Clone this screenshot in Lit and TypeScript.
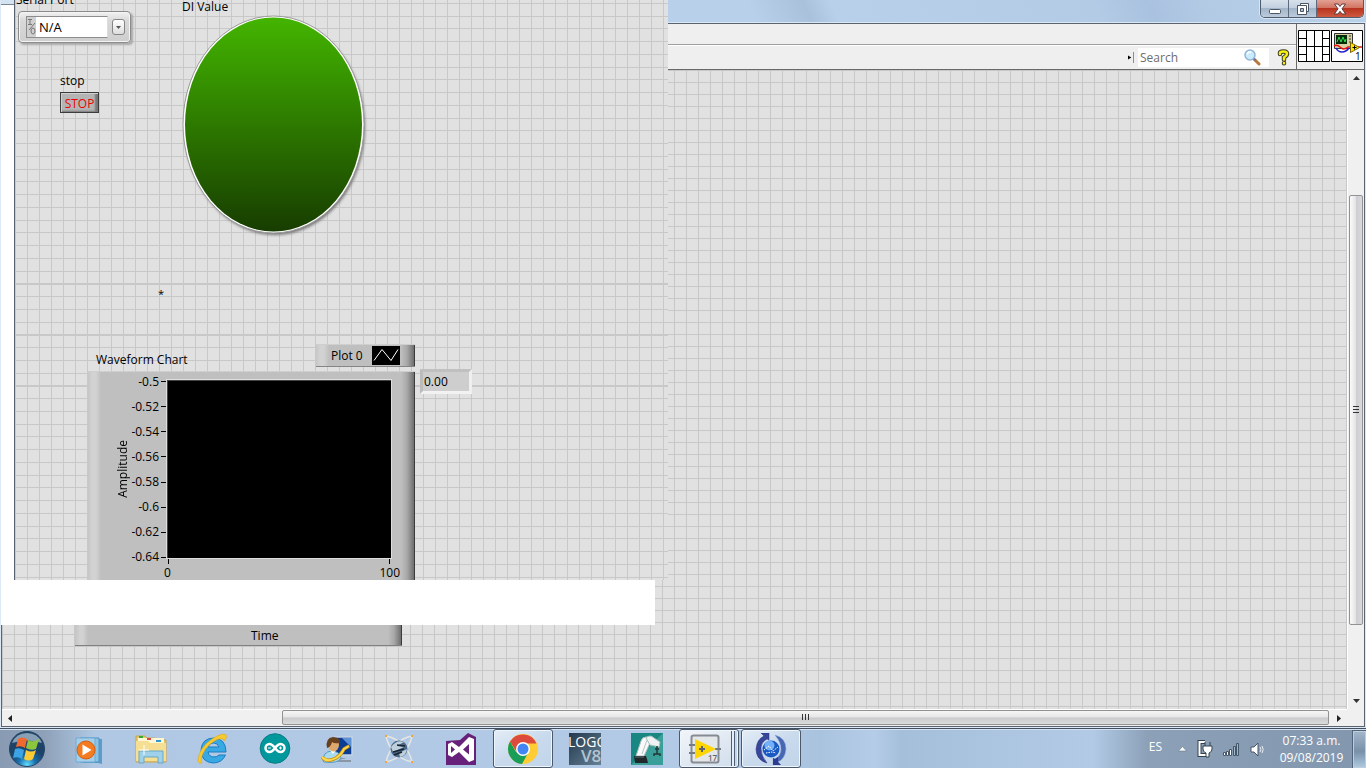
import { LitElement, html, css, svg } from "lit";
import { customElement } from "lit/decorators.js";

const base = css`
  * { box-sizing: border-box; }
  button { font: inherit; padding: 0; margin: 0; border: 0; background: none; color: inherit; }
  input { font: inherit; padding: 0; margin: 0; border: 0; outline: 0; min-width: 0; border-radius: 0; }
  svg { display: block; }
`;

@customElement("vi-window")
class ViWindow extends LitElement {
  static styles = [base, css`
    :host {
      display: grid;
      grid-template-rows: 23px 47px 1fr;
      min-height: 0;
      background: #dce8f5;
    }
    .title {
      display: flex;
      justify-content: flex-end;
      padding-right: 2px;
      background: linear-gradient(65deg, #b9d0ea 0 55%, #a9c1db 59%, #b9d0ea 61%, #b4cbe6 80%, #a9c2df 84%, #b3cae5 88%, #bad1ea);
      border-bottom: 1px solid #d9e8f6;
    }
    .caption {
      display: flex;
      height: 18px;
      border: 1px solid #4e5c6e;
      border-top: 0;
      border-radius: 0 0 5px 5px;
      overflow: hidden;
      box-shadow: 0 0 0 1px #d8e6f4;
    }
    .caption button {
      width: 28px;
      display: grid;
      place-items: center;
      background: linear-gradient(#d7e1ec, #c3d0df 45%, #a3b5ca 50%, #bccbdc);
      border-right: 1px solid #5d6b7c;
    }
    .caption .close {
      width: 46px;
      border-right: 0;
      background: linear-gradient(#e3a193, #d27563 45%, #b93420 50%, #cf5a3e);
    }
    .bars {
      display: flex;
      margin: 0 1px;
      border: 1px solid #5a636e;
      border-bottom: 1px solid #696969;
      background: #efefef;
    }
    .rows { flex: 1; display: grid; grid-template-rows: 21px 1fr; }
    .menu { border-bottom: 1px solid #a0a0a0; }
    .tools {
      display: flex;
      align-items: center;
      justify-content: flex-end;
      border-top: 1px solid #fff;
    }
    .arrow { width: 6px; height: 11px; border-right: 1px solid #8e8e8e; margin-right: 4px; }
    .search {
      display: flex;
      align-items: center;
      width: 131px;
      height: 19px;
      padding: 0 8px 0 2px;
      background: #fff;
      font-size: 12px;
    }
    .search input { flex: 1; height: 19px; background: none; }
    .search input::placeholder { color: #6d6d6d; opacity: 1; }
    .help { margin: 0 6px 0 8px; }
    .vi-icons { display: flex; gap: 1px; padding: 6px 1px 0; border-left: 1px solid #696969; }
    .body {
      display: grid;
      grid-template-columns: 1fr 17px;
      grid-template-rows: 1fr 17px;
      min-height: 0;
      margin: 0 1px 1px;
      border: 1px solid #5a636e;
      border-top: 0;
      background: #f0f0f0;
    }
    .canvas {
      position: relative;
      overflow: hidden;
      background-color: #e1e1e1;
      background-image: linear-gradient(#c8c8c8 1px, transparent 1px), linear-gradient(90deg, #c8c8c8 1px, transparent 1px);
      background-size: 12px 12px;
      background-position: 12px 12px;
    }
    .frame {
      position: absolute;
      left: 73px;
      top: 540px;
      width: 327px;
      height: 36px;
      padding: 18px 0 0 176px;
      font-size: 12px;
      line-height: 16px;
      color: #000;
      background: linear-gradient(90deg, #c4c4c4, #d2d2d2 5px 8px, #bfbfbf 13px calc(100% - 14px), #a8a8a8 calc(100% - 8px), #6e6e6e calc(100% - 1px), #3c3c3c calc(100% - 1px));
      border-bottom: 1px solid #808080;
    }
    .vbar, .hbar { display: flex; align-items: center; justify-content: space-between; background: #f0f0f0; }
    .vbar { flex-direction: column; padding: 6px 0 6px; border-left: 1px solid #fff; }
    .hbar { padding: 0 6px 0 6px; border-top: 1px solid #fff; }
    .vtrack { flex: 1; width: 100%; display: grid; grid-template-rows: 115fr 430fr 74fr; padding-left: 1px; padding-right: 1px; }
    .htrack { flex: 1; height: 100%; display: grid; grid-template-columns: 270fr 1046fr 8fr; }
    .thumb { display: grid; place-items: center; border: 1px solid #929292; border-radius: 2px; }
    .vthumb { grid-row: 2; background: linear-gradient(90deg, #fafafa, #e6e6e8 45%, #cdcdd2 55%, #dadade); }
    .hthumb { grid-column: 2; background: linear-gradient(#f6f6f6, #e6e6e7 45%, #c9cacd 55%, #dcdcdc); margin-bottom: 1px; }
  `];

  render() {
    return html`
      <header class="title">
        <div class="caption">
          <button aria-label="Minimize"><svg width="14" height="14"><rect x="1.500" y="7.500" width="11" height="4" rx="1" fill="#fff" stroke="#4b5563"/></svg></button>
          <button aria-label="Restore"><svg width="14" height="14" fill="#fff" stroke="#4b5563"><path d="M4.500 1.500h8v8h-8z"/><path d="M1.500 3.500h9v9h-9z"/><path d="M4.500 6.500h3v3h-3z" fill="#b2c2d4"/></svg></button>
          <button class="close" aria-label="Close"><svg width="14" height="12"><path d="M1.500 1h3.500l2 2.500 2-2.500h3.500l-3.500 4.800 3.700 5.200h-3.700l-2-2.700-2 2.700H1.300L5 5.800z" fill="#fff" stroke="#5d3a3e"/></svg></button>
        </div>
      </header>
      <div class="bars">
        <div class="rows">
          <div class="menu"></div>
          <div class="tools">
            <svg class="arrow" viewBox="0 0 6 11"><path d="M0 3v5l4-2.500z"/></svg>
            <label class="search">
              <input type="text" placeholder="Search" aria-label="Search">
              <svg width="17" height="17"><path d="M10 10l5 5" stroke="#b9783a" stroke-width="3" stroke-linecap="round"/><path d="M9.500 9.500l2 2" stroke="#7a6f86" stroke-width="2"/><circle cx="6" cy="6" r="5" fill="#c9ebfb" stroke="#92b4d8" stroke-width="1.500"/><path d="M3 5.500a3.500 3.500 0 0 1 4-2.500" fill="none" stroke="#fff" stroke-width="1.500"/></svg>
            </label>
            <button class="help" aria-label="Help"><svg width="13" height="17"><g fill="none" stroke-linecap="round"><path d="M3 5V4q0-1.500 3.500-1.500T10 5q0 1.500-3 3.500v2M7 14v.2" stroke="#3b3a20" stroke-width="4.500"/><path d="M3 5V4q0-1.500 3.500-1.500T10 5q0 1.500-3 3.500v2M7 14v.2" stroke="#f6ee10" stroke-width="2.500"/></g></svg></button>
          </div>
        </div>
        <div class="vi-icons">
          <svg width="32" height="32" fill="#fff" stroke="#000"><path d="M.5.500h31v31H.5z"/><path d="M8.500 0v32M16.500 0v32M24.500 0v32M0 8.500h8M0 16.500h32M0 24.500h8M24 8.500h8M24 24.500h8"/></svg>
          <svg width="32" height="32"><path d="M.5.500h31v31H.5z" fill="#fff" stroke="#000"/><path d="M3.500 3.500h18v15h-18z" fill="#d7d0a0" stroke="#333"/><path d="M5 5h11v9H5z" fill="#052b0b"/><path d="M6 12l2-5 2 5 2-5 2 5 1-3" stroke="#2ee04b" fill="none"/><path d="M18 6h2M18 9h2M18 12h2" stroke="#333"/><path d="M3 16q3-2 6 1l3 2q3 0 5-2h3" stroke="#e11" fill="none" stroke-width="1.500"/><path d="M5 18q2 4 6 4t7-4" stroke="#22c" fill="none" stroke-width="1.500"/><path d="M27 17h4" stroke="#e11" stroke-width="1.500"/><path d="M19.500 12.500v10l9-5z" fill="#ffe500" stroke="#7a6400"/><path d="M21.500 17.500h4m-2-2v4" stroke="#000"/><text x="24" y="30" font-size="10">1</text></svg>
        </div>
      </div>
      <div class="body">
        <div class="canvas"><div class="frame">Time</div></div>
        <div class="vbar">
          <svg width="7" height="4"><path d="M0 4L3.500 0 7 4z" fill="#333"/></svg>
          <div class="vtrack"><div class="thumb vthumb"><svg width="7" height="8"><path d="M0 .5h6M0 3.500h6M0 6.500h6" stroke="#333"/></svg></div></div>
          <svg width="7" height="4"><path d="M0 0L3.500 4 7 0z" fill="#333"/></svg>
        </div>
        <div class="hbar">
          <svg width="4" height="7"><path d="M4 0L0 3.500 4 7z" fill="#222"/></svg>
          <div class="htrack"><div class="thumb hthumb"><svg width="8" height="7"><path d="M.5 0v6M3.500 0v6M6.500 0v6" stroke="#333"/></svg></div></div>
          <svg width="4" height="7"><path d="M0 0l4 3.500L0 7z" fill="#222"/></svg>
        </div>
      </div>`;
  }
}

@customElement("front-panel")
class FrontPanel extends LitElement {
  static styles = [base, css`
    :host { display: block; font-size: 12px; line-height: 16px; color: #000; }
    .sheet { width: 668px; height: 580px; display: grid; grid-template-columns: 14px 1fr; }
    .edge { background: linear-gradient(#d4e3f2 0 4px, #7d8794 4px 5px, #fff 5px); border-left: 1px solid #dce8f5; }
    .blank { width: 655px; height: 45px; background: #fff; border-left: 1px solid #dce8f5; }
    .panel {
      position: relative;
      overflow: hidden;
      border-left: 1px solid #5a6170;
      background-color: #e1e1e1;
      background-image:
        linear-gradient(#c8c8c8, #c8c8c8), linear-gradient(#c8c8c8, #c8c8c8), linear-gradient(#c8c8c8, #c8c8c8),
        linear-gradient(transparent 3px, #c8c8c8 3px 4px, transparent 4px 16px, #c8c8c8 16px 17px, transparent 17px 28px, #c8c8c8 28px 29px, transparent 29px 41px, #c8c8c8 41px 42px, transparent 42px),
        linear-gradient(90deg, #c8c8c8 1px, transparent 1px);
      background-size: 100% 1px, 100% 1px, 100% 1px, 100% 51px, 12px 12px;
      background-position: 0 284px, 0 335px, 0 386px, 0 0, 0 0;
      background-repeat: no-repeat, no-repeat, no-repeat, repeat, repeat;
    }
    .item { position: absolute; white-space: nowrap; }
    .serial-label { left: 1px; top: -8px; }
    .serial {
      left: 3px; top: 11px;
      display: flex; align-items: center; gap: 4px;
      width: 113px; height: 32px; padding: 0 5px 0 7px;
      border: 1px solid #8b8b8b; border-radius: 4px;
      background: linear-gradient(#f2f2f2, #d8d8d8 30%, #cfcfcf);
      box-shadow: inset 0 0 0 1px #f4f4f4, 2px 2px 2px #aaa;
    }
    .field { flex: 1; display: flex; height: 22px; border: 1px solid #8d8d8d; border-right-color: #ddd; background: #d0d0d0; }
    .field input { flex: 1; width: 60px; padding-left: 3px; background: #fff; font-size: 13px; }
    .drop { width: 13px; height: 16px; border: 1px solid #858585; border-radius: 3px; background: linear-gradient(#fff, #ddd); display: grid; place-items: center; }
    .stop-label { left: 45px; top: 73px; }
    .stop {
      left: 45px; top: 92px; width: 39px; height: 21px;
      padding-top: 2px;
      color: #f00000;
      border: 1px solid #3c3c3c;
      background: #b4b4b4;
      box-shadow: inset 1px 1px 0 #d0d0d0, inset -3px -1px 2px #777;
    }
    .di-label { left: 167px; top: -1px; }
    .led { left: 165px; top: 12px; }
    .star { left: 143px; top: 286px; font-size: 11px; }
    .chart-label { left: 81px; top: 352px; }
    .metal { background: linear-gradient(90deg, #c6c6c6, #d2d2d2 4px 8px, #bfbfbf 13px calc(100% - 14px), #a8a8a8 calc(100% - 8px), #6e6e6e calc(100% - 1px), #3c3c3c calc(100% - 1px)); border-top: 1px solid #cfcfcf; }
    .legend { left: 301px; top: 344px; width: 99px; height: 23px; display: flex; align-items: center; justify-content: space-between; padding: 0 15px; border-bottom: 1px solid #858585; }
    .chart { left: 73px; top: 371px; width: 327px; height: 240px; display: grid; grid-template: 193px 16px / 71px 8px 224px; align-content: start; }
    .scale { display: flex; justify-content: flex-end; }
    .amp { writing-mode: vertical-rl; transform: rotate(180deg); align-self: center; }
    .ticks { display: flex; flex-direction: column; justify-content: space-between; text-align: right; width: 28px; padding-top: 2px; }
    .marks { display: flex; flex-direction: column; justify-content: space-between; padding: 9px 1px 7px 2px; }
    .mark { height: 1px; background: #000; }
    .plot { align-self: start; margin-top: 8px; height: 178px; background: #000; outline: 1px solid #dedede; border-top: 1px solid #444; border-left: 1px solid #444; }
    .plotcell { display: grid; }
    .xmarks { display: flex; justify-content: space-between; align-self: start; height: 5px; padding: 0 1px; }
    .xmark { width: 1px; background: #000; }
    .xlabels { grid-column: 3; display: flex; justify-content: space-between; margin: 0 -9px 0 -3px; }
    .digital { left: 405px; top: 369px; width: 52px; height: 25px; border: 3px solid; border-color: #c0c0c0 #efefef #f2f2f2 #bcbcbc; background: #cecece; padding: 2px 1px; }
  `];

  render() {
    const values = ["-0.5", "-0.52", "-0.54", "-0.56", "-0.58", "-0.6", "-0.62", "-0.64"];
    return html`
      <div class="sheet">
        <div class="edge"></div>
        <div class="panel">
          <label class="item serial-label" for="port">Serial Port</label>
          <div class="item serial">
            <div class="field">
              <svg width="9" height="20" fill="none" stroke="#777"><path d="M1 2.500h4M3 2.500v5M1 7.500h4M8 6l-6 7"/><ellipse cx="6" cy="14" rx="2" ry="3"/></svg>
              <input id="port" type="text" value="N/A">
            </div>
            <button class="drop" aria-label="Choose port"><svg width="5" height="3"><path d="M0 0h5L2.500 3z" fill="#555"/></svg></button>
          </div>
          <label class="item stop-label" for="stop">stop</label>
          <button class="item stop" id="stop">STOP</button>
          <div class="item di-label">DI Value</div>
          <svg class="item led" width="190" height="228">
            <defs>
              <linearGradient id="g" x2="0" y2="1"><stop stop-color="#44b400"/><stop offset=".25" stop-color="#389800"/><stop offset=".6" stop-color="#296d00"/><stop offset="1" stop-color="#173d00"/></linearGradient>
              <filter id="s"><feGaussianBlur stdDeviation="1.500"/></filter>
            </defs>
            <ellipse cx="95" cy="115" rx="90" ry="108" fill="#777" filter="url(#s)"/>
            <ellipse cx="93.500" cy="112.500" rx="90.500" ry="108.500" fill="#fff" stroke="#999"/>
            <ellipse cx="93.500" cy="112.500" rx="88.500" ry="107" fill="url(#g)"/>
          </svg>
          <div class="item star">*</div>
          <div class="item chart-label">Waveform Chart</div>
          <div class="item legend metal">
            <span>Plot 0</span>
            <svg width="28" height="19"><path d="M0 0h28v19H0z"/><path d="M2 14.500l8-11 9 11 7-11" fill="none" stroke="#fff"/></svg>
          </div>
          <div class="item chart metal">
            <div class="scale"><div class="amp">Amplitude</div><div class="ticks">${values.map(v => html`<span>${v}</span>`)}</div></div>
            <div class="marks">${values.map(() => html`<div class="mark"></div>`)}</div>
            <div class="plotcell"><div class="plot"></div><div class="xmarks"><div class="xmark"></div><div class="xmark"></div></div></div>
            <div class="xlabels"><span>0</span><span>100</span></div>
          </div>
          <output class="item digital">0.00</output>
        </div>
      </div>
      <div class="blank"></div>`;
  }
}

const icons: Record<string, unknown> = {
  "Media Player": svg`<path d="M10 6h19v25l-4-1H10z" fill="#5d9bcb"/><path d="M7 5h19v24H7z" fill="#8cc3e4" stroke="#4f93c3"/><path d="M3 5h19v24H3z" fill="#a4cee9" stroke="#6eabd2"/><circle cx="13" cy="17" r="9" fill="#f47b20" stroke="#d65e0c"/><path d="M9.500 11.500v11l9-5.500z" fill="#fff"/>`,
  "Explorer": svg`<path d="M1 3h9l2 2h8l2 2h9v22H1z" fill="#e8c96a" stroke="#c9a64d"/><path d="M3 5h26v5H3z" fill="#fff6d5"/><path d="M4 3h4v2H4z" fill="#3a3"/><path d="M12 5h4v2h-4z" fill="#d44"/><path d="M21 7h5v2h-5z" fill="#39c"/><path d="M1 8h12l2 2h16v18H1z" fill="#f6df93"/><path d="M4 30V18h24v12h-5v-6H9v6z" fill="#9fd2ea" stroke="#68a7c7"/><path d="M9 12v10M4 17h10" stroke="#fff"/>`,
  "Internet Explorer": svg`<path d="M29 19H11q1 5 6 5 3 0 5-2h6.500Q25 30 16 30 4 29 4 17 5 5 17 5q12 1 12 14zM11 14h11q-1-4-5.500-4T11 14z" fill="#39a9e4" stroke="#1b7dc2" fill-rule="evenodd"/><path d="M5 30Q1 31 1 27 2 15 15 6q11-7 14-4 2 2-2 6 0-4-8-1Q5 15 4 28z" fill="#f8ca32" stroke="#dda615" stroke-width=".6"/>`,
  "Arduino": svg`<circle cx="16" cy="15.500" r="14.800" fill="#00979d" stroke="#087c83"/><path d="M16 15q-3-4-5.500-4a4 4 0 0 0 0 8q2.500 0 5.500-4t5.500-4a4 4 0 0 1 0 8Q19 19 16 15z" fill="none" stroke="#fff" stroke-width="2.500"/><path d="M9 15h3M20 15h3M21.500 13.500v3" stroke="#fff"/>`,
  "User tools": svg`<path d="M14 4h17v18H14z" fill="#0c3d95" stroke="#c3d4e5" stroke-width="1.500"/><path d="M21 5h9v9z" fill="#5a91d8"/><path d="M18 27h12v2H16l4-4h6z" fill="#8b97a5"/><path d="M2 28q0-9 8-10 9 0 10 7-3 6-17 4z" fill="#a9daf0" stroke="#549bbc"/><path d="M9 17l3 4 3-4z" fill="#fff"/><ellipse cx="12.500" cy="12" rx="5.500" ry="6.500" fill="#dca86b"/><path d="M6 15q-2-10 6-11 7 0 7 6-6 1-8-1-1 5-5 6z" fill="#68401d"/><path d="M1 24q5 6 14 1 5-3 8-9l5-3" fill="none" stroke="#c58d12" stroke-width="3.500"/><path d="M1 24q5 6 14 1 5-3 8-9l5-3" fill="none" stroke="#ffd84a" stroke-width="2"/>`,
  "Orbit": svg`<g fill="none" stroke="#e4e6e4" stroke-width="1.500"><path d="M3 3q10 2 17 9t9 17Q19 27 12 20T3 3zM29 3q-10 2-17 9T3 29q10-2 17-9T29 3z"/></g><circle cx="16" cy="16" r="8.500" fill="#4a6787"/><path d="M8 14q6-8 13-5l-7 4 7 1-11 5zM16 20l8-4q-1 7-7 8z" fill="#bdd0dc"/><path d="M10 19l11-3M11 22l8-3M14 12l8 1" stroke="#1a2430" stroke-width="1.500"/><path d="M2 2h2v2H2zM28 2h2v2h-2zM2 28h2v2H2zM28 28h2v2h-2z" fill="#f2a33a"/>`,
  "Visual Studio": svg`<path d="M1 8l14-1 8-7 8 4v28H1z" fill="#68217a"/><path d="M24 4l5 2v21l-5 2-10-10-7 5-4-2V11l4-2 7 5zM6 13v7l4-3.500zM24 11l-6 5.500 6 5z" fill="#fff" fill-rule="evenodd"/>`,
  "Chrome": svg`<circle cx="16" cy="16" r="15" fill="#fc3"/><path d="M3 8.500A15 15 0 0 0 15 31l6-11-12-1z" fill="#189e57"/><path d="M3 8.500l7 11 6-9h13.500A15 15 0 0 0 3 8.500z" fill="#dc4b3e"/><circle cx="16" cy="16" r="7" fill="#fff"/><circle cx="16" cy="16" r="5.500" fill="#4285f4"/>`,
  "Logo Soft": svg`<defs><linearGradient id="lg" x2="1" y2="1"><stop stop-color="#24384b"/><stop offset="1" stop-color="#648197"/></linearGradient></defs><path d="M0 0h32v32H0z" fill="url(#lg)"/><text x="-1" y="14" font-size="14" font-weight="500" fill="#fff">LOGO</text><text x="12" y="29" font-size="17" font-weight="600" fill="#b4c3cf">V8</text>`,
  "Robot": svg`<path d="M0 0h32v32H0z" fill="#188781"/><path d="M0 32L32 0v32z" fill="#3a9f98"/><path d="M5 23l5-15q1-4 5-4h5l-1 6-6 13z" fill="#fafafa" stroke="#a9bfbf"/><path d="M15 5q4-4 8 0l6 4-1 5-9-2z" fill="#eef2f2" stroke="#a9bfbf"/><path d="M16 7l-5 14" stroke="#b5c4c6"/><path d="M3 23h12l1 3 1 4H4z" fill="#20282b"/><path d="M4 24h9" stroke="#5f6f72"/><path d="M26 13v8M24 16h4M23 23v-2h6v2" fill="none" stroke="#22383a" stroke-width="1.500"/>`,
  "LabVIEW": svg`<rect x="2.500" y="2.500" width="27" height="27" rx="2" fill="#e4e7ea" stroke="#858b91" stroke-width="2"/><path d="M0 12h6M0 20h6M26 16h6" stroke="#737b83" stroke-width="2"/><path d="M6 6v20l21-10z" fill="#ffd500"/><path d="M13 13v6M10 16h6" stroke="#5d6470" stroke-width="2"/><text x="19" y="28" font-size="8" font-weight="600" fill="#5e6469">17</text>`,
  "Update": svg`<circle cx="16" cy="16" r="8.500" fill="#1859c4"/><circle cx="14.500" cy="12.500" r="5" fill="#73b0f8"/><path d="M9 17l5-4 4 5 5-4M11 20l6-1 4 1" stroke="#fff" fill="none" stroke-dasharray="1.500 1"/><path d="M12 30Q1 27 1 16 2 6 9 3L6 0h8v7l-2-1Q6 9 6 16t6 14z" fill="#37459a" stroke="#26337c" stroke-width=".5"/><path d="M20 2q11 3 11 14-1 10-8 13l3 3h-8v-7l2 1q6-3 6-10T20 2z" fill="#4867b2" stroke="#8aa6d8" stroke-width=".5"/><path d="M18 25l2 1 3-2v5l3 3h-8z" fill="#2e3c90"/>`,
};

@customElement("task-bar")
class TaskBar extends LitElement {
  static styles = [base, css`
    :host {
      display: flex;
      height: 40px;
      border-top: 1px solid #414f61;
      box-shadow: inset 0 1px #d5e2ef;
      background: linear-gradient(90deg, #899bb2, #8ea1b9 45px, #b0c8e3 95px, #b2cae6 55%, #a9c3df 60%, #b5cce8 64%, #a5bfdb 66%, #b2cae6 80%, #8ca1b8 84%, #8297ad);
      color: #fff;
      font-size: 12px;
    }
    .start { width: 59px; padding-left: 8px; }
    .apps { display: flex; gap: 2px; }
    .app { width: 60px; height: 39px; display: grid; place-items: center; border-radius: 3px; }
    .app svg { overflow: hidden; }
    .open { border: 1px solid #4b596a; box-shadow: inset 0 0 0 1px #eef5fc; background: linear-gradient(150deg, #e5edf6, #c9daed 50%, #c1d4e9); }
    .stack { background: linear-gradient(90deg, transparent 51px, #4f6076 51px 52px, #e5eef8 52px 54px, #4f6076 54px 55px, #c3d6ea 55px), linear-gradient(150deg, #f2f5f9, #cfddec); padding-right: 8px; }
    .tray { margin-left: auto; display: flex; align-items: center; }
    .lang { margin-right: 16px; padding-bottom: 5px; }
    .status { display: flex; align-items: center; gap: 10px; }
    .clock { width: 85px; text-align: center; line-height: 17px; padding-left: 8px; }
    .show { width: 14px; height: 39px; border: 1px solid #52657a; border-right: 0; background: linear-gradient(#a4b7cb, #7890a8 55%, #b0cbe2); box-shadow: inset 0 0 0 1px #bccddd; margin-left: 2px; }
  `];

  render() {
    const state: Record<string, string> = { Chrome: "open", LabVIEW: "open stack", Update: "open" };
    return html`
      <button class="start" aria-label="Start">
        <svg width="38" height="38"><defs><radialGradient id="orb" cy=".95"><stop stop-color="#63dcff"/><stop offset=".5" stop-color="#176fae"/><stop offset="1" stop-color="#1d4369"/></radialGradient></defs><circle cx="19" cy="19" r="17.500" fill="url(#orb)" stroke="#244461"/><path d="M4 13Q8 3 19 3t15 10q-15-5-30 0z" fill="#c2d3e0" opacity=".65"/><path d="M10 9q4-3 9 0l-2 9q-4-3-9-1z" fill="#f06a30"/><path d="M20 10q5 3 11-1l-3 10q-5 2-10-1z" fill="#8cc63f"/><path d="M7 19q4-2 9 1l-2 9q-4-3-9-1z" fill="#3ca4e4"/><path d="M18 20q5 3 10 0l-3 9q-4 3-9 0z" fill="#fbcb35"/></svg>
      </button>
      <nav class="apps">
        ${Object.entries(icons).map(([name, art]) => html`<button class="app ${state[name] ?? ""}" aria-label=${name}><svg width="32" height="32">${art}</svg></button>`)}
      </nav>
      <div class="tray">
        <span class="lang">ES</span>
        <div class="status">
          <svg width="9" height="6"><path d="M.5 5L4.500.5l4 4.500z" fill="#fff" stroke="#66788b" stroke-width=".6"/></svg>
          <svg width="16" height="18"><path d="M8 2H2.500v13H10" fill="none" stroke="#34424f" stroke-width="4"/><path d="M8 2H2.500v13H10" fill="none" stroke="#fff" stroke-width="2"/><path d="M6 6h9v3q0 3-3 4v4H9v-4Q6 12 6 9zM8 2v4M13 2v4" fill="#fff" stroke="#34424f"/></svg>
          <svg width="17" height="14"><g fill="#fff" stroke="#43576a"><path d="M.5 10.500h2v3h-2zM3.500 9.500h2v4h-2zM6.500 7.500h2v6h-2z"/><path d="M10.500 4.500h2v9h-2zM13.500 1.500h2v12h-2z" fill="#a9b8c6"/></g></svg>
          <svg width="15" height="15"><path d="M1 5h3l4-4v13l-4-4H1z" fill="#fff" stroke="#465668"/><path d="M10 5q2 2.500 0 5M12 4q2.500 3.500 0 7" fill="none" stroke="#e8eef4"/></svg>
        </div>
        <div class="clock"><div>07:33 a.m.</div><div>09/08/2019</div></div>
        <button class="show" aria-label="Show desktop"></button>
      </div>`;
  }
}

@customElement("app-root")
class AppRoot extends LitElement {
  static styles = css`
    :host {
      position: relative;
      display: grid;
      grid-template-rows: minmax(0, 1fr) 40px;
      height: 100vh;
      overflow: hidden;
      font-family: "Open Sans", "Noto Sans", sans-serif;
    }
    .floating { position: absolute; left: 0; top: 0; }
  `;

  render() {
    return html`<vi-window></vi-window><task-bar></task-bar><front-panel class="floating"></front-panel>`;
  }
}
